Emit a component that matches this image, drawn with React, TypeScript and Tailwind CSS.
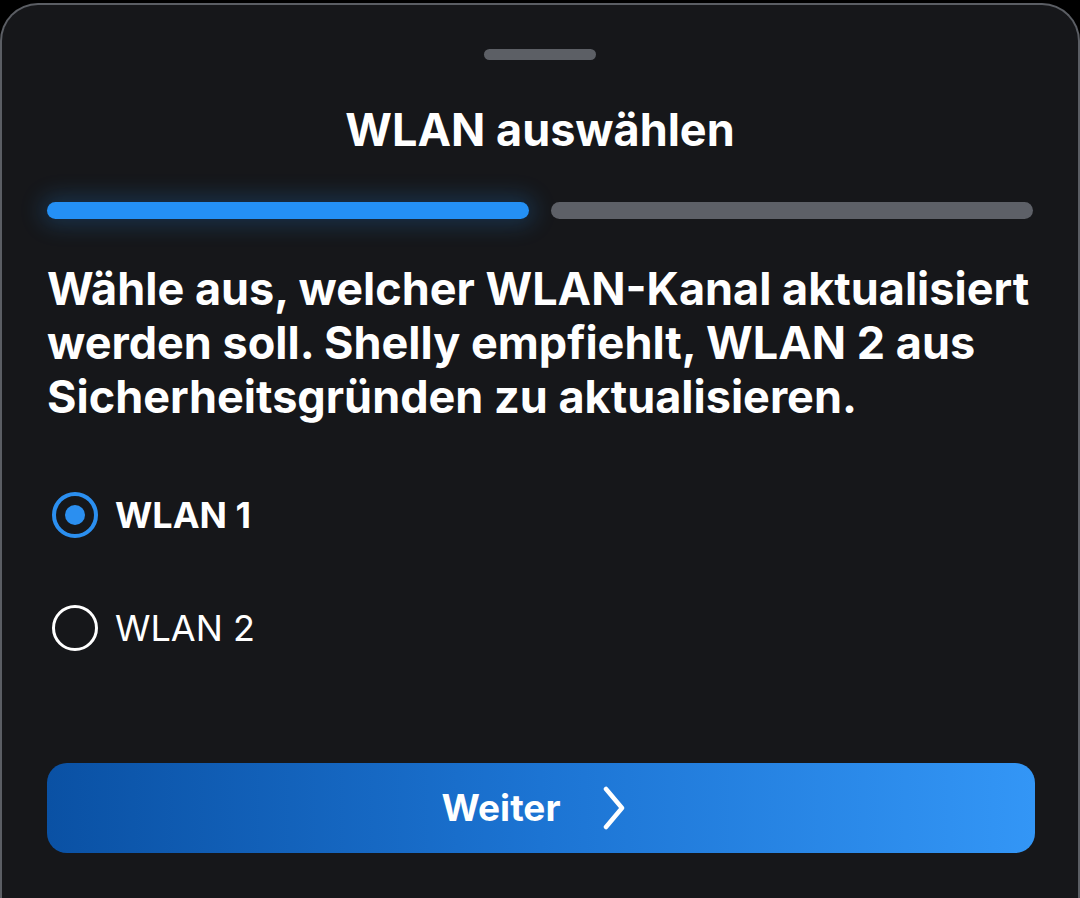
import { useState } from 'react';

const FONT = { fontFamily: 'Inter, "Noto Sans", sans-serif' };

type Option = { id: string; label: string };

const OPTIONS: Option[] = [
  { id: 'wlan1', label: 'WLAN 1' },
  { id: 'wlan2', label: 'WLAN 2' },
];

function Radio({ checked }: { checked: boolean }) {
  return checked ? (
    <span className="flex h-[46px] w-[46px] items-center justify-center rounded-full border-[4px] border-[#2b8ff0]">
      <span className="h-[20px] w-[20px] rounded-full bg-[#2b8ff0]" />
    </span>
  ) : (
    <span className="h-[46px] w-[46px] rounded-full border-[3px] border-white" />
  );
}

export default function App() {
  const [selected, setSelected] = useState('wlan1');

  return (
    <div className="h-[898px] w-[1080px] overflow-hidden bg-black pt-[3px]" style={FONT}>
      <div className="flex h-[895px] flex-col rounded-t-[38px] border-2 border-b-0 border-[#5b5e64] bg-[#16171a] px-[45px]">
        {/* drag handle */}
        <div className="mt-[44px] flex justify-center">
          <div className="h-[11px] w-[112px] rounded-full bg-[#5c5f65]" />
        </div>

        <h1 className="mt-[44px] text-center text-[45px] font-bold leading-[52px] text-white">
          WLAN auswählen
        </h1>

        {/* step progress */}
        <div className="mt-[46px] flex gap-[22px]">
          <div className="h-[17px] flex-1 rounded-full bg-[#2490f5] shadow-[0_0_22px_6px_rgba(36,144,245,0.22)]" />
          <div className="h-[17px] flex-1 rounded-full bg-[#5d6067]" />
        </div>

        <p className="mt-[43px] text-[45px] font-bold leading-[54px] text-white">
          Wähle aus, welcher WLAN-Kanal aktualisiert werden soll. Shelly empfiehlt, WLAN 2 aus
          Sicherheitsgründen zu aktualisieren.
        </p>

        <div className="mt-[68px] flex flex-col gap-[67px]">
          {OPTIONS.map((o) => (
            <button
              key={o.id}
              type="button"
              onClick={() => setSelected(o.id)}
              className="flex items-center gap-[17px] pl-[5px] text-left"
            >
              <Radio checked={selected === o.id} />
              <span
                className={
                  selected === o.id
                    ? 'text-[36px] font-bold leading-[46px] text-white'
                    : 'text-[36px] font-normal leading-[46px] text-white'
                }
              >
                {o.label}
              </span>
            </button>
          ))}
        </div>

        <button
          type="button"
          className="mt-[112px] -mr-[2px] flex h-[90px] items-center justify-center gap-[42px] rounded-[20px] bg-gradient-to-r from-[#0a51a4] via-[#1c74d3] to-[#3396f6] pr-[14px] text-white"
        >
          <span className="text-[37px] font-bold">Weiter</span>
          <svg width="24" height="44" viewBox="0 0 24 44" fill="none">
            <polyline
              points="4,3 20,22 4,41"
              stroke="white"
              strokeWidth="4.5"
              strokeLinecap="round"
              strokeLinejoin="round"
            />
          </svg>
        </button>
      </div>
    </div>
  );
}
